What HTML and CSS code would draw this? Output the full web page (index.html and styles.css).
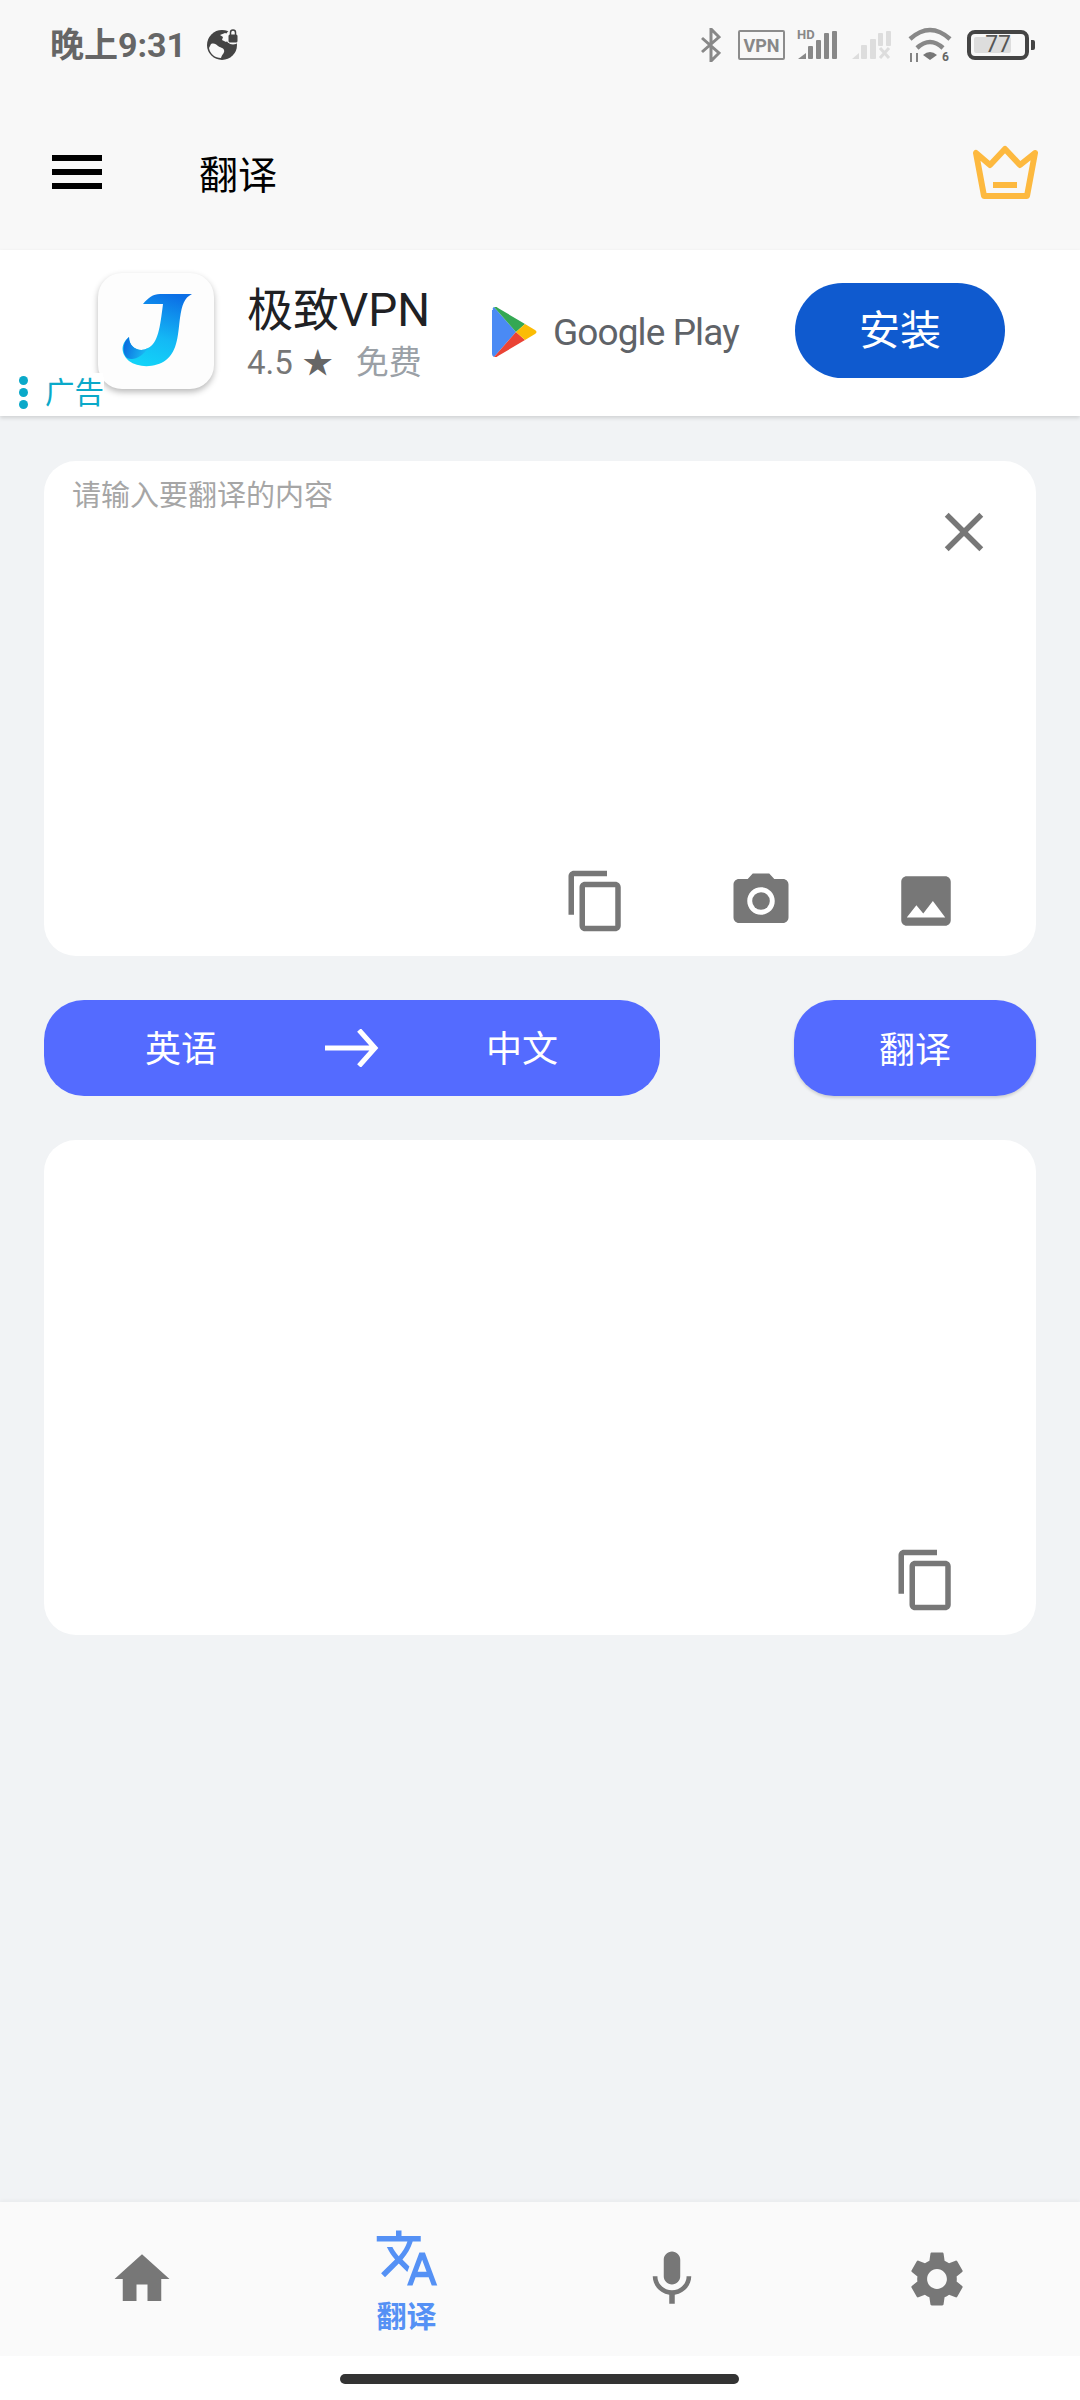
FILE: index.html
```html
<!DOCTYPE html>
<html lang="zh">
<head>
<meta charset="utf-8">
<title>翻译</title>
<link rel="stylesheet" href="styles.css">
</head>
<body>
<div class="page">
  <header class="top">
    <div class="status">
      <div class="status-left">
        <span class="time">晚上9:31</span>
        <svg class="globe" width="34" height="34" viewBox="0 0 34 34">
          <circle cx="16" cy="18" r="15" fill="#444"/>
          <path d="M5 17c3-1 5 0 7 2s5 1 6 4-2 4-3 8c-6 0-11-4-12-10zM19 6c3 1 5 2 8 5l-4 2-3 2-4-2 1-3-3-2z" fill="#f8f8f8"/>
          <circle cx="27" cy="10" r="7.5" fill="#f8f8f8"/>
          <rect x="22.500" y="7.500" width="9" height="8" rx="1.500" fill="#444"/>
          <path d="M24.500 8V5.500a2.500 2.500 0 0 1 5 0V8" fill="none" stroke="#444" stroke-width="1.500"/>
        </svg>
      </div>
      <div class="status-right">
        <svg class="s-bt" width="21" height="34" viewBox="0 0 21 34"><path d="M2 10l17 15-8 8V1l8 8L2 24" fill="none" stroke="#888" stroke-width="3"/></svg>
        <span class="vpn">VPN</span>
        <svg class="s-sig" width="42" height="32" viewBox="0 0 42 32">
          <text x="0" y="11" class="hd">HD</text>
          <path d="M1 31l8-6v6z" fill="#888"/>
          <rect x="11" y="18" width="5" height="13" rx="1" fill="#888"/>
          <rect x="19" y="12" width="5" height="19" rx="1" fill="#888"/>
          <rect x="27" y="5" width="5" height="26" rx="1" fill="#888"/>
          <rect x="35" y="3" width="5" height="28" rx="1" fill="#888"/>
        </svg>
        <svg class="s-sig2" width="42" height="32" viewBox="0 0 42 32">
          <path d="M1 31l7-6v6z" fill="#ddd"/>
          <rect x="10" y="17" width="6" height="14" rx="1" fill="#ddd"/>
          <rect x="19" y="11" width="6" height="20" rx="1" fill="#ddd"/>
          <rect x="27" y="5" width="5" height="13" rx="1" fill="#ddd"/>
          <rect x="35" y="3" width="5" height="15" rx="1" fill="#ddd"/>
          <path d="M29 20l9 10m0-10l-9 10" stroke="#ddd" stroke-width="3"/>
        </svg>
        <svg class="s-wifi" width="44" height="38" viewBox="0 0 44 38">
          <path d="M2 13Q22-5 42 13" fill="none" stroke="#888" stroke-width="4.500"/>
          <path d="M9 22Q22 10 35 22" fill="none" stroke="#888" stroke-width="4.500"/>
          <path d="M15 29q7-6 14 0l-7 5z" fill="#777"/>
          <path d="M3 27v9M9 27v9" stroke="#777" stroke-width="1.800"/>
          <text x="34" y="35" class="wifi-n">6</text>
        </svg>
        <div class="battery">
          <div class="battery-body"><div class="battery-fill">77</div></div>
          <div class="battery-nub"></div>
        </div>
      </div>
    </div>
    <div class="appbar">
      <div class="burger"><i></i><i></i><i></i></div>
      <h1 class="title">翻译</h1>
      <svg class="crown" width="66" height="54" viewBox="0 0 66 54">
        <path d="M4 8l8 43h43l8-43-15 12L33 4 18 20z" fill="none" stroke="#fdb93f" stroke-width="6" stroke-linejoin="round"/>
        <rect x="21" y="37" width="24" height="6" fill="#fdb93f"/>
      </svg>
    </div>
  </header>

  <section class="ad">
    <div class="ad-icon">
      <svg width="116" height="116" viewBox="0 0 116 116">
        <defs>
          <linearGradient id="j" x1="0.7" y1="0" x2="0.4" y2="1">
            <stop offset="0" stop-color="#0b6fe6"/>
            <stop offset="0.6" stop-color="#14b8f5"/>
            <stop offset="1" stop-color="#12d2f8"/>
          </linearGradient>
          <linearGradient id="j2" x1="0" y1="0" x2="1" y2="0.3">
            <stop offset="0" stop-color="#0a62dc"/>
            <stop offset="1" stop-color="#1ab7f2"/>
          </linearGradient>
        </defs>
        <path d="M45 31C50 25 55 21 62 21L94 21C86 25 84 32 82 45C80 60 80 78 68 87C58 95 40 95 31 88C24 82 21 72 31 64C31 75 42 80 50 75C60 70 62 55 65 31Z" fill="url(#j)"/>
        <path d="M31 64C31 75 42 80 50 75C44 84 36 88 29 85C24 80 24 70 31 64Z" fill="url(#j2)"/>
      </svg>
    </div>
    <div class="ad-text">
      <div class="ad-name">极致VPN</div>
      <div class="ad-meta">
        <span class="ad-rate">4.5</span>
        <span class="ad-star">★</span>
        <span class="ad-free">免费</span>
      </div>
    </div>
    <div class="gplay">
      <svg width="46" height="50" viewBox="0 0 46 50">
        <path d="M1 3Q0 1 2 0L24 25 2 50Q0 49 0 47V3z" fill="#4a8af4"/>
        <path d="M2 0Q4-1 6 1L33 17 24 25z" fill="#34a853"/>
        <path d="M2 50Q4 51 6 49L33 33 24 25z" fill="#ea4335"/>
        <path d="M33 17l10 6q3 2 0 4L33 33 24 25z" fill="#fbbc04"/>
      </svg>
      <span class="gplay-text">Google Play</span>
    </div>
    <div class="install">安装</div>
    <div class="ad-badge">
      <span class="dots"><i></i><i></i><i></i></span>
      <span class="ad-label">广告</span>
    </div>
  </section>

  <main class="main">
    <section class="card">
      <div class="card-head">
        <span class="placeholder">请输入要翻译的内容</span>
        <svg class="icon close" viewBox="0 0 24 24"><path d="M19 6.410L17.590 5 12 10.590 6.410 5 5 6.410 10.590 12 5 17.590 6.410 19 12 13.410 17.590 19 19 17.590 13.410 12z"/></svg>
      </div>
      <div class="card-tools">
        <svg class="icon" viewBox="0 0 24 24"><path d="M16 1H4c-1.100 0-2 .9-2 2v14h2V3h12V1zm3 4H8c-1.100 0-2 .9-2 2v14c0 1.100.9 2 2 2h11c1.100 0 2-.9 2-2V7c0-1.100-.9-2-2-2zm0 16H8V7h11v14z"/></svg>
        <svg class="icon" viewBox="0 0 24 24"><circle cx="12" cy="12" r="3.200"/><path d="M9 2L7.170 4H4c-1.100 0-2 .9-2 2v12c0 1.100.9 2 2 2h16c1.100 0 2-.9 2-2V6c0-1.100-.9-2-2-2h-3.170L15 2H9zm3 15c-2.760 0-5-2.240-5-5s2.240-5 5-5 5 2.240 5 5-2.240 5-5 5z"/></svg>
        <svg class="icon" viewBox="0 0 24 24"><path d="M21 19V5c0-1.100-.9-2-2-2H5c-1.100 0-2 .9-2 2v14c0 1.100.9 2 2 2h14c1.100 0 2-.9 2-2zM8.500 13.500l2.500 3.010L14.500 12l4.500 6H5l3.500-4.500z"/></svg>
      </div>
    </section>

    <div class="actions">
      <div class="btn btn-lang">
        <span>英语</span>
        <svg class="arrow" width="54" height="38" viewBox="0 0 54 38"><path d="M0 19H50M34 1l16 18-16 18" fill="none" stroke="#fff" stroke-width="5"/></svg>
        <span>中文</span>
      </div>
      <div class="btn btn-go">翻译</div>
    </div>

    <section class="card card-result">
      <div class="card-tools">
        <svg class="icon" viewBox="0 0 24 24"><path d="M16 1H4c-1.100 0-2 .9-2 2v14h2V3h12V1zm3 4H8c-1.100 0-2 .9-2 2v14c0 1.100.9 2 2 2h11c1.100 0 2-.9 2-2V7c0-1.100-.9-2-2-2zm0 16H8V7h11v14z"/></svg>
      </div>
    </section>
  </main>

  <nav class="nav">
    <div class="nav-item">
      <svg class="icon nav-icon" viewBox="0 0 24 24"><path d="M10 20v-6h4v6h5v-8h3L12 3 2 12h3v8z"/></svg>
    </div>
    <div class="nav-item active">
      <svg class="icon nav-icon" viewBox="0 0 24 24"><path d="M12.870 15.070l-2.540-2.510.03-.03c1.740-1.940 2.980-4.170 3.710-6.530H17V4h-7V2H8v2H1v1.990h11.170C11.500 7.920 10.440 9.750 9 11.350 8.070 10.320 7.300 9.190 6.690 8h-2c.73 1.630 1.730 3.170 2.980 4.560l-5.090 5.020L4 19l5-5 3.110 3.110.76-2.040zM18.500 10h-2L12 22h2l1.120-3h4.750L21 22h2l-4.500-12zm-2.620 7l1.620-4.330L19.120 17h-3.240z"/></svg>
      <span class="nav-label">翻译</span>
    </div>
    <div class="nav-item">
      <svg class="icon nav-icon" viewBox="0 0 24 24"><path d="M12 14c1.660 0 2.990-1.340 2.990-3L15 5c0-1.660-1.340-3-3-3S9 3.340 9 5v6c0 1.660 1.340 3 3 3zm5.300-3c0 3-2.540 5.100-5.300 5.100S6.700 14 6.700 11H5c0 3.410 2.720 6.230 6 6.720V21h2v-3.280c3.280-.48 6-3.300 6-6.720h-1.700z"/></svg>
    </div>
    <div class="nav-item">
      <svg class="icon nav-icon" viewBox="0 0 24 24"><path d="M19.140 12.940c.04-.3.060-.61.060-.94 0-.32-.02-.64-.07-.94l2.030-1.580c.18-.14.23-.41.120-.61l-1.920-3.320c-.12-.22-.37-.29-.59-.22l-2.390.96c-.5-.38-1.030-.7-1.620-.94l-.36-2.540c-.04-.24-.24-.41-.48-.41h-3.840c-.24 0-.43.17-.47.41l-.36 2.540c-.59.24-1.130.57-1.620.94l-2.390-.96c-.22-.08-.47 0-.59.220L2.740 8.870c-.12.21-.08.47.12.61l2.030 1.580c-.05.3-.09.63-.09.94s.02.64.07.94l-2.030 1.580c-.18.14-.23.41-.12.61l1.920 3.320c.12.22.37.29.59.22l2.390-.96c.5.38 1.030.7 1.620.94l.36 2.540c.05.24.24.41.48.41h3.840c.24 0 .44-.17.47-.41l.36-2.540c.59-.24 1.130-.56 1.620-.94l2.390.96c.22.08.47 0 .59-.22l1.920-3.320c.12-.22.07-.47-.12-.61l-2.010-1.580zM12 15.600c-1.980 0-3.600-1.620-3.600-3.600s1.620-3.600 3.600-3.600 3.600 1.620 3.600 3.600-1.620 3.600-3.600 3.600z"/></svg>
    </div>
  </nav>

  <div class="gesture"><div class="gesture-bar"></div></div>
</div>
</body>
</html>
```
FILE: styles.css
```css
* { box-sizing: border-box; }
html, body { margin: 0; padding: 0; }
body { font-family: Roboto, "Noto Sans CJK SC", sans-serif; background: #f1f3f5; }
.page { width: 1080px; height: 2400px; display: flex; flex-direction: column; overflow: hidden; }

.top { background: #f8f8f8; height: 250px; flex: none; }
.status { height: 90px; display: flex; justify-content: space-between; align-items: center; padding: 0 45px 0 50px; }
.status-left { display: flex; align-items: center; gap: 20px; }
.time { font-size: 34px; line-height: 40px; font-weight: 700; color: #666; margin-top: -1px; }
.globe { margin-top: -2px; }
.status-right { display: flex; align-items: center; }
.s-bt { margin-right: 17px; }
.vpn { width: 47px; height: 30px; border: 2px solid #8c8c8c; border-radius: 2px; color: #888; font-size: 18px; font-weight: 700; display: flex; align-items: center; justify-content: center; margin-right: 12px; }
.hd { font: 700 13px Roboto, sans-serif; fill: #888; }
.s-sig { margin-right: 12px; margin-top: -2px; }
.s-sig2 { margin-right: 15px; margin-top: -2px; }
.s-wifi { margin-right: 15px; }
.wifi-n { font: 700 12px Roboto, sans-serif; fill: #666; }
.battery { display: flex; align-items: center; gap: 2px; }
.battery-body { width: 62px; height: 30px; border: 4px solid #444; border-radius: 8px; padding: 3px; display: flex; }
.battery-fill { width: 37px; height: 16px; background: #ddd; border-radius: 2px; color: #555; font-size: 23px; line-height: 16px; display: flex; justify-content: flex-end; }
.battery-nub { width: 4px; height: 10px; background: #444; border-radius: 0 2px 2px 0; }

.appbar { height: 160px; padding: 4px 42px 0 52px; display: flex; align-items: center; }
.burger { width: 50px; display: flex; flex-direction: column; gap: 8px; }
.burger i { display: block; height: 6px; background: #000; }
.title { margin: 0 0 0 97px; flex: 1; font-size: 39px; font-weight: 400; color: #000; }

.ad { position: relative; flex: none; height: 166px; background: #fff; box-shadow: 0 2px 4px rgba(0,0,0,.14); display: flex; align-items: center; padding-left: 98px; }
.ad-icon { width: 116px; height: 116px; border-radius: 24px; background: #fdfdfd; box-shadow: 0 3px 6px rgba(0,0,0,.28); flex: none; margin-top: -5px; }
.ad-text { margin-left: 33px; width: 243px; flex: none; display: flex; flex-direction: column; gap: 5px; }
.ad-name { font-size: 46px; line-height: 54px; color: #202124; white-space: nowrap; }
.ad-meta { font-size: 33px; line-height: 42px; display: flex; align-items: center; white-space: nowrap; }
.ad-rate { color: #777; }
.ad-star { color: #666; margin-left: 10px; font-size: 30px; }
.ad-free { color: #9aa0a6; margin-left: 23px; }
.gplay { display: flex; align-items: center; gap: 15px; width: 303px; margin-left: 2px; flex: none; margin-top: -2px; }
.gplay-text { font-size: 37px; color: #5f6368; letter-spacing: -.9px; white-space: nowrap; }
.install { width: 210px; height: 95px; margin-top: -5px; border-radius: 48px; background: #0f5acf; color: #fff; font-size: 41px; line-height: 44px; display: flex; align-items: center; justify-content: center; flex: none; }
.ad-badge { position: absolute; left: 0; bottom: 0; width: 103px; height: 43px; padding: 0 0 4px 19px; background: linear-gradient(to right, transparent 90%, #fff 90%); display: flex; align-items: center; gap: 17px; }
.dots { display: flex; flex-direction: column; gap: 3px; }
.dots i { display: block; width: 9px; height: 9px; border-radius: 50%; background: #0aa9c9; }
.ad-label { font-size: 29.5px; line-height: 32px; color: #0aa9c9; background: #fff; white-space: nowrap; }

.main { flex: 1; padding: 45px 44px 0; display: flex; flex-direction: column; gap: 44px; }
.card { height: 495px; background: #fff; border-radius: 32px; display: flex; flex-direction: column; justify-content: space-between; }
.card-result { justify-content: flex-end; }
.card-head { display: flex; justify-content: space-between; padding: 20px 39px 0 28px; }
.placeholder { font-size: 29px; line-height: 30px; color: #a6a6a6; }
.icon { width: 66px; height: 66px; fill: #777; flex: none; display: block; }
.close { margin-top: 18px; }
.card-tools { display: flex; justify-content: flex-end; gap: 99px; padding: 0 77px 22px 0; }

.actions { display: flex; justify-content: space-between; }
.btn { height: 96px; border-radius: 40px; background: #546bff; color: #fff; font-size: 36px; display: flex; align-items: center; }
.btn span, .btn-go { line-height: 40px; }
.btn-lang { width: 616px; padding: 0 102px 0 101px; justify-content: space-between; }
.btn-lang span { margin-top: 4px; }
.btn-go { width: 242px; justify-content: center; padding-top: 5px; box-shadow: 0 2px 3px rgba(0,0,0,.15); }
.arrow { flex: none; }

.nav { flex: none; height: 154px; background: #fafafa; padding: 0 11px 0 9px; display: grid; grid-template-columns: repeat(4, 1fr); box-shadow: 0 -2px 3px rgba(0,0,0,.03); }
.nav-item { display: flex; flex-direction: column; align-items: center; justify-content: center; }
.active .nav-icon { fill: #5591f5; }
.nav-label { font-size: 30px; line-height: 32px; font-weight: 700; color: #5591f5; margin-top: 10px; }

.gesture { flex: none; height: 44px; background: #fff; padding: 18px 2px 0 0; display: flex; justify-content: center; }
.gesture-bar { width: 399px; height: 10px; border-radius: 5px; background: #333; }
```
